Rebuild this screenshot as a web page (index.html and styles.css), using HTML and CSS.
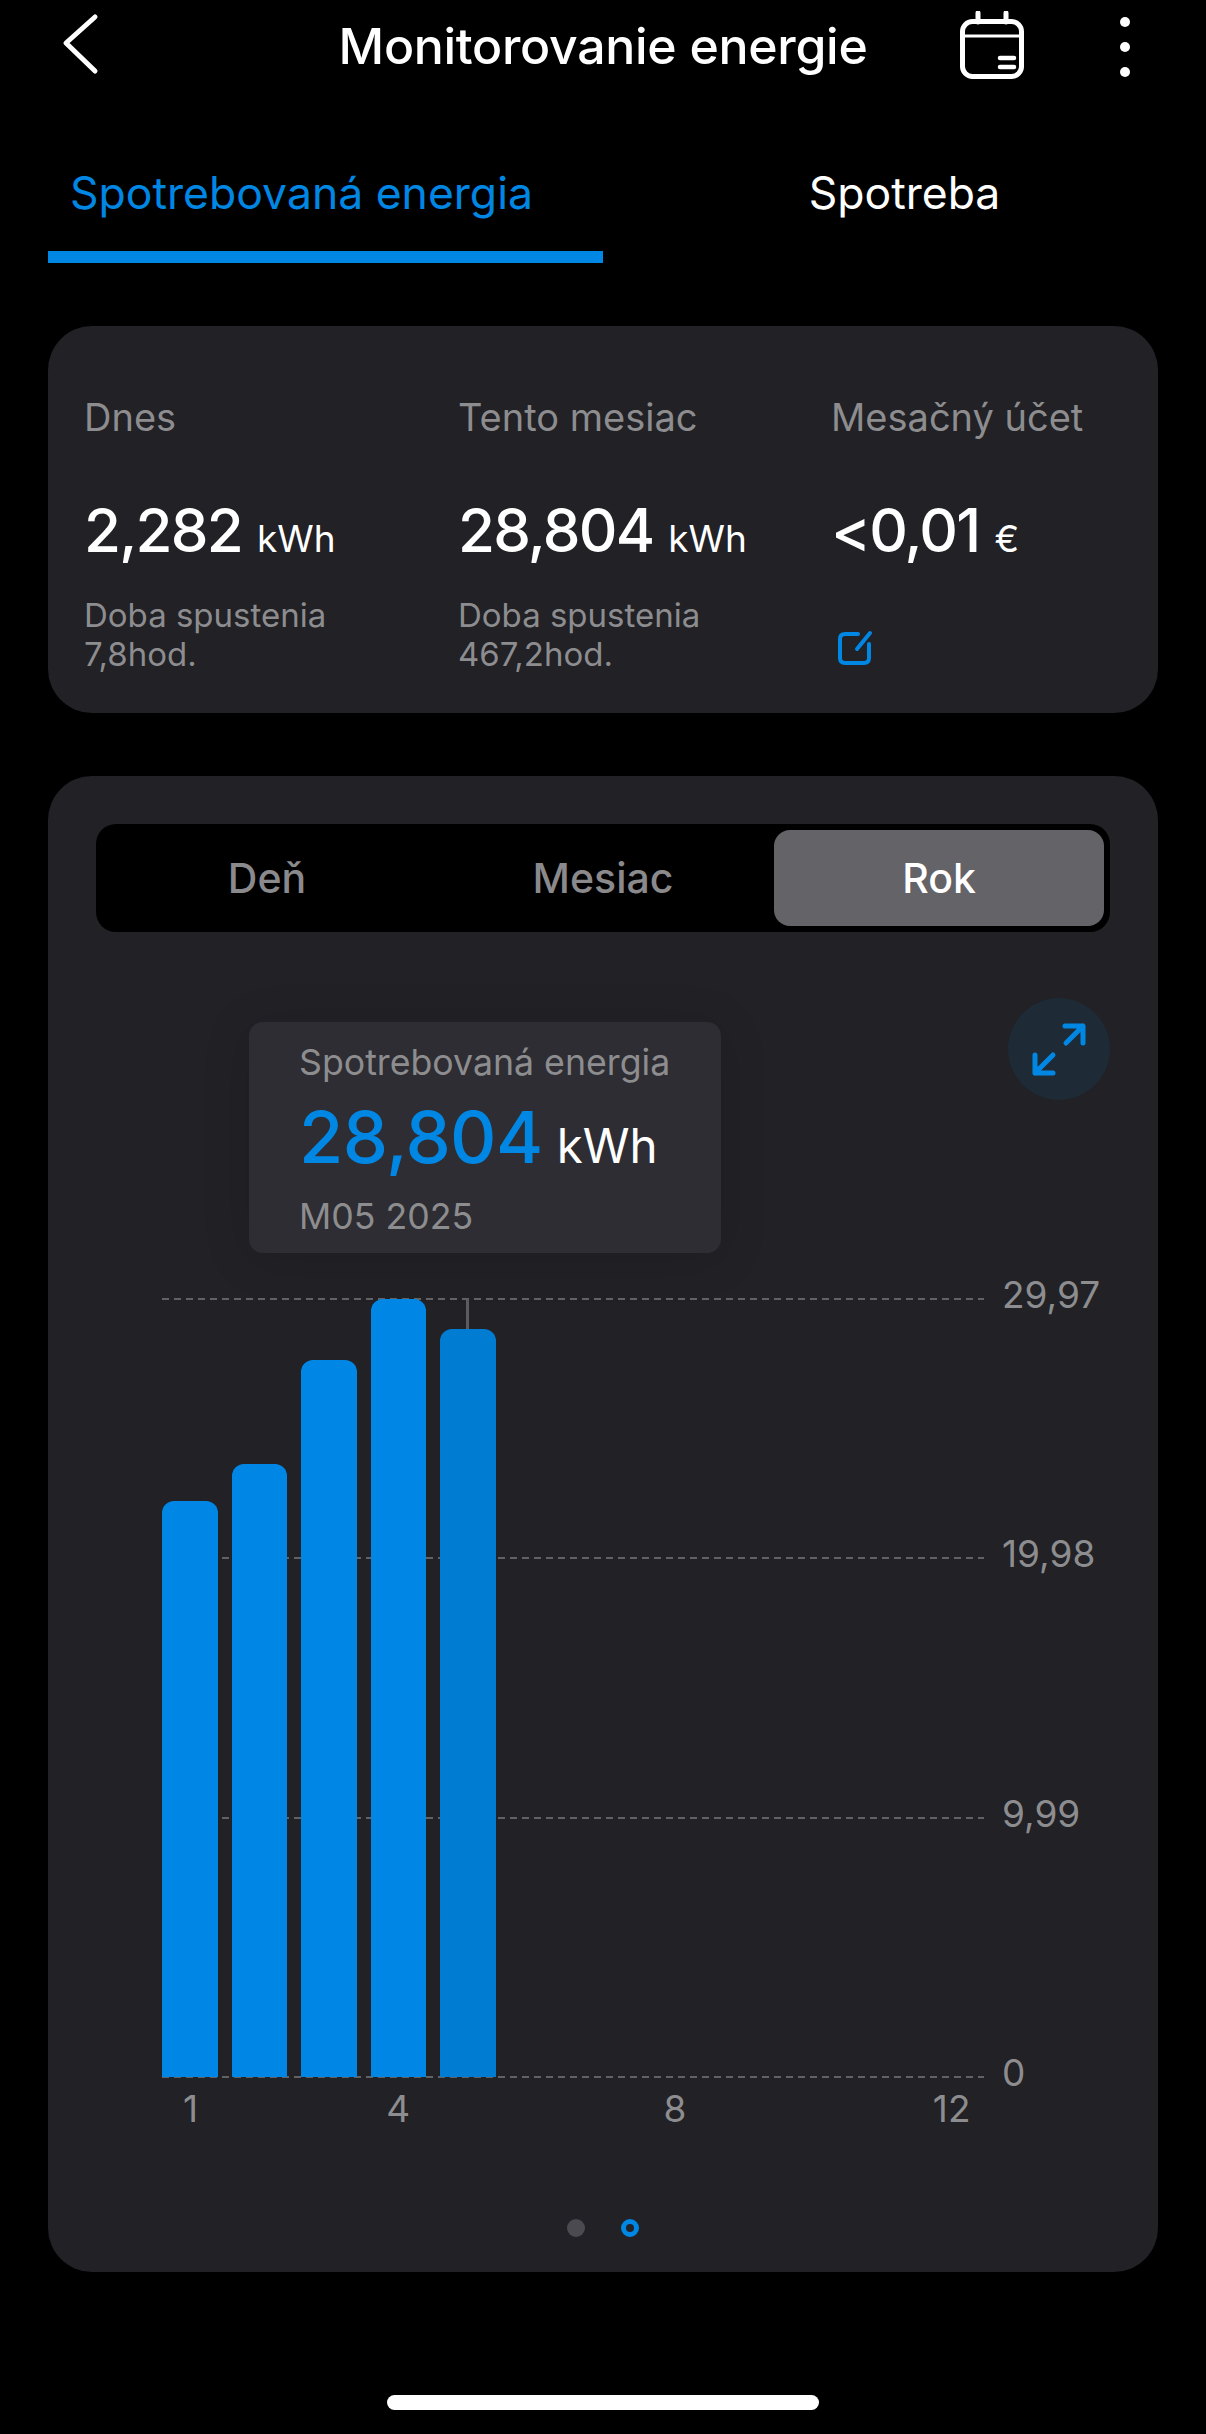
FILE: index.html
```html
<!DOCTYPE html>
<html>
<head>
    <title>Monitorovanie energie</title>
    <link rel="stylesheet" href="styles.css">
</head>
<body>
    <div class="screen">
        <header class="top-bar">
            <svg class="back-icon" width="40" height="70" viewBox="0 0 40 70">
                <path d="M35 5 L6 31 L35 59"/>
            </svg>
            <h1 class="page-title">Monitorovanie energie</h1>
            <div class="top-actions">
                <svg class="calendar-icon" width="66" height="72" viewBox="0 0 66 72">
                    <path d="M19 2 V11 M47 2 V11"/>
                    <rect x="3.5" y="10.5" width="59" height="55" rx="10"/>
                    <path class="thin" d="M4 25 H62"/>
                    <path class="thin-bold" d="M41 47 H55 M41 56 H55"/>
                </svg>
                <div class="more-icon"><span></span><span></span><span></span></div>
            </div>
        </header>

        <nav class="tabs">
            <div class="tab active">Spotrebovaná energia</div>
            <div class="tab">Spotreba</div>
        </nav>

        <section class="card stats">
            <div class="stat">
                <div class="stat-label">Dnes</div>
                <div class="stat-value">2,282<small>kWh</small></div>
                <div class="stat-note">Doba spustenia<br>7,8hod.</div>
            </div>
            <div class="stat">
                <div class="stat-label">Tento mesiac</div>
                <div class="stat-value">28,804<small>kWh</small></div>
                <div class="stat-note">Doba spustenia<br>467,2hod.</div>
            </div>
            <div class="stat">
                <div class="stat-label">Mesačný účet</div>
                <div class="stat-value">&lt;0,01<small>€</small></div>
                <svg class="edit-icon" width="36" height="36" viewBox="0 0 36 36">
                    <path d="M21 4 H8 Q3 4 3 9 V28 Q3 33 8 33 H27 Q32 33 32 28 V14"/>
                    <path d="M33 3 L20 19"/>
                </svg>
            </div>
        </section>

        <section class="card chart-card">
            <div class="segments">
                <div class="segment">Deň</div>
                <div class="segment">Mesiac</div>
                <div class="segment active">Rok</div>
            </div>

            <div class="chart-top">
                <div class="tooltip">
                    <div class="tooltip-title">Spotrebovaná energia</div>
                    <div class="tooltip-value">28,804<small>kWh</small></div>
                    <div class="tooltip-date">M05 2025</div>
                </div>
                <div class="expand-btn">
                    <svg width="102" height="102" viewBox="0 0 102 102">
                        <path d="M57 28 H75 V45 M75 28 L58 45"/>
                        <path d="M27 57 V75 H45 M27 75 L45 57"/>
                    </svg>
                </div>
            </div>

            <div class="plot">
                <div class="grid-row"><div class="grid-line"></div><span>29,97</span></div>
                <div class="grid-row"><div class="grid-line"></div><span>19,98</span></div>
                <div class="grid-row"><div class="grid-line"></div><span>9,99</span></div>
                <div class="grid-row"><div class="grid-line"></div><span>0</span></div>

                <div class="bars">
                    <div class="bar" style="height: 74%"></div>
                    <div class="bar" style="height: 78.8%"></div>
                    <div class="bar" style="height: 92.2%"></div>
                    <div class="bar" style="height: 100%"></div>
                    <div class="bar selected" style="height: 96.1%"></div>
                </div>
            </div>

            <div class="x-axis">
                <span class="m1">1</span>
                <span class="m4">4</span>
                <span class="m8">8</span>
                <span class="m12">12</span>
            </div>

            <div class="pager">
                <span class="dot"></span>
                <span class="dot current"></span>
            </div>
        </section>

        <div class="home-bar"></div>
    </div>
</body>
</html>
```

FILE: styles.css
```css
* {
    box-sizing: border-box;
}

body {
    margin: 0;
    background: #000;
    color: #fff;
    font-family: Inter, "Noto Sans", sans-serif;
}

.screen {
    width: 1206px;
    height: 2434px;
    overflow: hidden;
}

/* Top bar */
.top-bar {
    display: grid;
    grid-template-columns: 1fr auto 1fr;
    align-items: center;
    height: 94px;
    padding: 0 76px;
}

.back-icon {
    margin-left: -16px;
}

.back-icon path {
    fill: none;
    stroke: #fff;
    stroke-width: 5;
    stroke-linecap: round;
    stroke-linejoin: round;
}

.page-title {
    margin: 0 0 3px;
    font-size: 50px;
    font-weight: 500;
    letter-spacing: -0.3px;
}

.top-actions {
    display: flex;
    justify-content: flex-end;
    align-items: center;
    gap: 95px;
}

.calendar-icon path,
.calendar-icon rect {
    fill: none;
    stroke: #fff;
    stroke-width: 5;
    stroke-linecap: round;
}

.calendar-icon .thin {
    stroke-width: 3;
}

.calendar-icon .thin-bold {
    stroke-width: 4.5;
}

.more-icon {
    display: flex;
    flex-direction: column;
    gap: 15px;
}

.more-icon span {
    width: 10px;
    height: 10px;
    border-radius: 50%;
    background: #fff;
}

/* Tabs */
.tabs {
    display: flex;
    margin: 0 48px;
    height: 169px;
}

.tab {
    width: 50%;
    text-align: center;
    font-size: 44.5px;
    line-height: 52px;
    padding: 73px 0 0 48px;
}

.tab.active {
    color: #0087e4;
    height: 169px;
    border-bottom: 12px solid #0087e4;
    padding: 73px 48px 0 0;
}

/* Cards */
.card {
    background: #212126;
    border-radius: 44px;
    margin: 0 48px;
}

.stats {
    display: grid;
    grid-template-columns: 374px 373px 1fr;
    height: 387px;
    margin-top: 63px;
    padding: 69px 0 0 36px;
}

.stat-label {
    font-size: 38px;
    line-height: 44px;
    color: #8d8d8f;
}

.stat-value {
    font-size: 60px;
    font-weight: 500;
    line-height: 72px;
    letter-spacing: -1.8px;
    margin-top: 55px;
}

.stat-value small {
    font-size: 37px;
    font-weight: 400;
    letter-spacing: 0;
    margin-left: 15px;
}

.stat-note {
    font-size: 33px;
    line-height: 39px;
    color: #8d8d8f;
    margin-top: 21px;
}

.edit-icon {
    display: block;
    margin: 55px 0 0 6px;
}

.edit-icon path {
    fill: none;
    stroke: #0087e4;
    stroke-width: 4;
    stroke-linecap: round;
}

/* Chart card */
.chart-card {
    height: 1496px;
    margin-top: 63px;
    padding: 48px 48px 0;
}

.segments {
    display: grid;
    grid-template-columns: 330px 342px 330px;
    height: 108px;
    padding: 6px;
    background: #000;
    border-radius: 20px;
}

.segment {
    display: flex;
    align-items: center;
    justify-content: center;
    font-size: 41px;
    font-weight: 500;
    color: #8a8a8c;
    border-radius: 16px;
}

.segment.active {
    background: #636368;
    color: #fff;
}

.chart-top {
    display: flex;
    justify-content: space-between;
    align-items: flex-start;
    margin-top: 66px;
}

.tooltip {
    width: 472px;
    height: 231px;
    margin: 24px 0 0 153px;
    padding: 18px 0 0 50px;
    background: #2d2d33;
    border-radius: 14px;
    box-shadow: 0 6px 50px rgba(0, 0, 0, 0.12);
}

.tooltip-title,
.tooltip-date {
    font-size: 35.7px;
    line-height: 44px;
    color: #8d8d8f;
}

.tooltip-value {
    font-size: 72px;
    font-weight: 500;
    line-height: 84px;
    letter-spacing: -0.6px;
    margin-top: 11px;
    color: #0087e4;
}

.tooltip-value small {
    font-size: 47.5px;
    font-weight: 400;
    letter-spacing: 0;
    margin-left: 14px;
    color: #fff;
}

.tooltip-date {
    margin-top: 6px;
}

.expand-btn {
    width: 102px;
    height: 102px;
    border-radius: 50%;
    background: #1e2a35;
}

.expand-btn path {
    fill: none;
    stroke: #0087e4;
    stroke-width: 5;
    stroke-linecap: round;
    stroke-linejoin: round;
}

/* Plot: grid rows spread over the height, bars sit on top */
.plot {
    position: relative;
    display: flex;
    flex-direction: column;
    justify-content: space-between;
    height: 780px;
    margin: 45px 0 0 66px;
}

.grid-row {
    display: flex;
    align-items: center;
    gap: 18px;
    height: 2px;
    font-size: 37px;
    color: #8d8d8f;
}

.grid-row span {
    margin-bottom: 9px;
}

.grid-line {
    width: 822px;
    height: 2px;
    background: repeating-linear-gradient(90deg, #626264 0 7px, transparent 7px 12px);
}

.bars {
    position: absolute;
    left: 0;
    bottom: 1px;
    display: flex;
    align-items: flex-end;
    gap: 14px;
    height: 778px;
}

.bar {
    position: relative;
    width: 55.5px;
    background: #0087e6;
    border-radius: 12px 12px 0 0;
}

.bar.selected {
    background: #007cd2;
}

.bar.selected::before {
    content: "";
    position: absolute;
    left: 26px;
    bottom: 100%;
    width: 3px;
    height: 30px;
    background: #5c5c60;
}

.x-axis {
    display: grid;
    grid-template-columns: repeat(12, 69.2px);
    margin: 11px 0 0 60px;
    font-size: 37px;
    line-height: 40px;
    color: #8d8d8f;
    text-align: center;
}

.m1 { grid-column: 1; }
.m4 { grid-column: 4; }
.m8 { grid-column: 8; }
.m12 { grid-column: 12; }

.pager {
    display: flex;
    justify-content: center;
    gap: 36px;
    margin-top: 90px;
}

.dot {
    width: 18px;
    height: 18px;
    border-radius: 50%;
    background: #4a4a50;
}

.dot.current {
    background: none;
    border: 5.5px solid #0087e4;
}

.home-bar {
    width: 432px;
    height: 15px;
    margin: 123px auto 0;
    background: #fff;
    border-radius: 8px;
}
```
